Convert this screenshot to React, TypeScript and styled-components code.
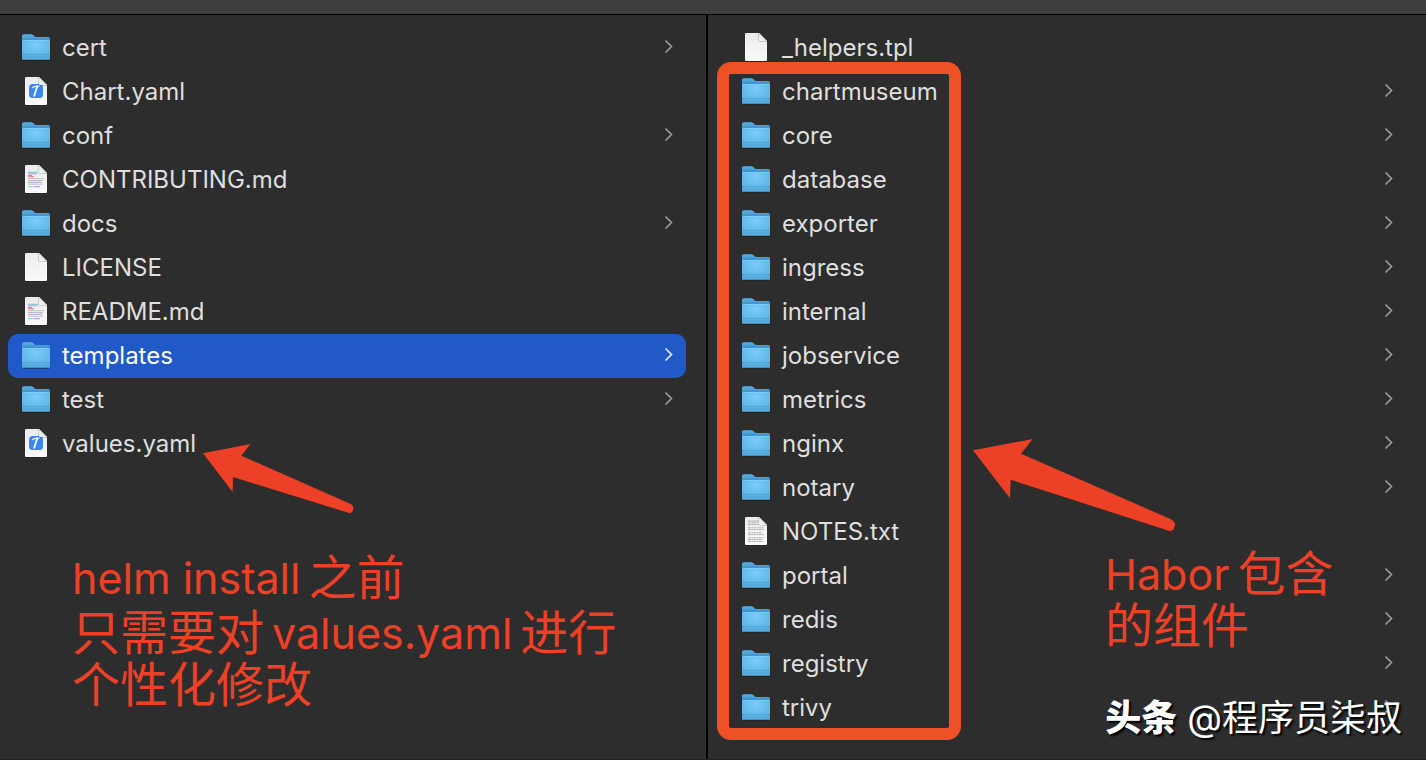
import React from "react";
import styled, { createGlobalStyle } from "styled-components";

const GlobalStyle = createGlobalStyle`
  *, *::before, *::after { box-sizing: border-box; }
  body {
    margin: 0;
    background: #2d2d2d;
    font-family: Inter, "Noto Sans CJK SC", sans-serif;
    -webkit-font-smoothing: antialiased;
  }
`;

const Page = styled.div`
  position: relative;
  display: flex;
  flex-direction: column;
  min-height: 100vh;
  background: #2d2d2d;
  border-bottom: 1px solid #232024;
`;

const Toolbar = styled.header`
  flex: none;
  height: 15px;
  background: #3e3e3e;
  border-bottom: 1px solid #000;
`;

const Browser = styled.main`
  flex: 1;
  display: flex;
`;

const Column = styled.section<{ $first?: boolean }>`
  position: relative;
  ${(p) =>
    p.$first
      ? "flex: none; width: calc(50% - 5px); padding: 11px 20px 10px 8px; border-right: 2px solid #000;"
      : "flex: 1; min-width: 0; padding: 11px 20px 10px;"}
`;

const FileList = styled.ul`
  margin: 0;
  padding: 0;
  list-style: none;
`;

const FileRow = styled.button<{ $selected?: boolean }>`
  display: flex;
  align-items: center;
  gap: 12px;
  width: 100%;
  height: 44px;
  padding: 0 14px;
  border: 0;
  border-radius: 10px;
  background: ${(p) => (p.$selected ? "#2159c8" : "transparent")};
  color: ${(p) => (p.$selected ? "#ffffff" : "#dfdfdf")};
  font-family: inherit;
  font-size: 24px;
  font-weight: 400;
  line-height: 32px;
  text-align: left;
`;

const FileName = styled.span`
  flex: 1;
  min-width: 0;
  white-space: nowrap;
`;

const IconSvg = styled.svg`
  flex: none;
  width: 28px;
  height: 32px;
  overflow: visible;
`;

const ChevronSvg = styled.svg<{ $selected?: boolean }>`
  flex: none;
  width: 8px;
  height: 14px;
  overflow: visible;
  fill: none;
  stroke: ${(p) => (p.$selected ? "#e4ebf9" : "#9b9b9b")};
  stroke-width: 1.7;
`;

const Highlight = styled.div`
  position: absolute;
  left: 9px;
  top: 47px;
  width: 244px;
  height: 678px;
  border: 12px solid #ee5126;
  border-radius: 14px;
  pointer-events: none;
`;

const Arrow = styled.svg<{ $x: number; $y: number }>`
  position: absolute;
  left: ${(p) => p.$x}px;
  top: ${(p) => p.$y}px;
  fill: #ec4126;
  pointer-events: none;
`;

const Note = styled.div<{ $x: number; $y: number }>`
  position: absolute;
  left: ${(p) => p.$x}px;
  top: ${(p) => p.$y}px;
  color: #ec4126;
  font-size: 48px;
  font-weight: 400;
  white-space: nowrap;
`;

const NoteLine = styled.p<{ $tall?: boolean }>`
  display: flex;
  gap: 8px;
  margin: 0;
  line-height: ${(p) => (p.$tall ? 58 : 52)}px;
`;

const Latin = styled.span`
  font-size: 43px;
`;

const Watermark = styled.div`
  position: absolute;
  right: 24px;
  bottom: 15px;
  display: flex;
  align-items: center;
  gap: 10px;
  color: #fff;
  font-size: 36px;
  line-height: 52px;
  white-space: nowrap;
  text-shadow: 2px 2px 2px #000;
`;

const WatermarkBrand = styled.strong`
  font-weight: 900;
`;

type Kind = "folder" | "yaml" | "md" | "blank" | "txt";
type Item = { name: string; kind: Kind; selected?: boolean };

const rootItems: Item[] = [
  { name: "cert", kind: "folder" },
  { name: "Chart.yaml", kind: "yaml" },
  { name: "conf", kind: "folder" },
  { name: "CONTRIBUTING.md", kind: "md" },
  { name: "docs", kind: "folder" },
  { name: "LICENSE", kind: "blank" },
  { name: "README.md", kind: "md" },
  { name: "templates", kind: "folder", selected: true },
  { name: "test", kind: "folder" },
  { name: "values.yaml", kind: "yaml" },
];

const templateItems: Item[] = [
  { name: "_helpers.tpl", kind: "blank" },
  { name: "chartmuseum", kind: "folder" },
  { name: "core", kind: "folder" },
  { name: "database", kind: "folder" },
  { name: "exporter", kind: "folder" },
  { name: "ingress", kind: "folder" },
  { name: "internal", kind: "folder" },
  { name: "jobservice", kind: "folder" },
  { name: "metrics", kind: "folder" },
  { name: "nginx", kind: "folder" },
  { name: "notary", kind: "folder" },
  { name: "NOTES.txt", kind: "txt" },
  { name: "portal", kind: "folder" },
  { name: "redis", kind: "folder" },
  { name: "registry", kind: "folder" },
  { name: "trivy", kind: "folder" },
];

function IconDefs() {
  return (
    <svg width="0" height="0" style={{ position: "absolute" }} aria-hidden="true">
      <defs>
        <linearGradient id="folderBack" x1="0" y1="0" x2="0" y2="1">
          <stop offset="0" stopColor="#58b2e6" />
          <stop offset="0.3" stopColor="#3a87c4" />
          <stop offset="1" stopColor="#3a87c4" />
        </linearGradient>
        <radialGradient id="folderFront" cx="0.5" cy="0.25" r="0.75">
          <stop offset="0" stopColor="#7acbf8" />
          <stop offset="1" stopColor="#59b1e4" />
        </radialGradient>
        <linearGradient id="paper" x1="0" y1="0" x2="0" y2="1">
          <stop offset="0" stopColor="#ececec" />
          <stop offset="1" stopColor="#fafafa" />
        </linearGradient>
        <linearGradient id="fold" x1="0" y1="1" x2="1" y2="0">
          <stop offset="0" stopColor="#ffffff" />
          <stop offset="0.5" stopColor="#e2e2e2" />
          <stop offset="1" stopColor="#bdbdbd" />
        </linearGradient>
      </defs>
    </svg>
  );
}

function FolderIcon() {
  return (
    <IconSvg viewBox="0 1 28 32" aria-hidden="true">
      <path d="M1 28.5h26v1.2H1z" fill="#1d2226" opacity="0.7" />
      <path d="M0 5a1.8 1.8 0 0 1 1.8-1.8H9c1 0 1.5.3 2.2.9l1.3 1.2c.5.5 1 .7 1.7.7H26.5A1.5 1.5 0 0 1 28 7.5V27H0z" fill="url(#folderBack)" />
      <path d="M0 10.3A1.3 1.3 0 0 1 1.3 9H26.7A1.3 1.3 0 0 1 28 10.3V27.5A1.5 1.5 0 0 1 26.5 29H1.5A1.5 1.5 0 0 1 0 27.5z" fill="url(#folderFront)" />
      <path d="M.8 9.5H27.2" stroke="#85d3fa" strokeWidth="0.7" />
      <path d="M0 23.7H28M0 26H28" stroke="#4698cc" strokeWidth="0.7" />
      <path d="M.8 28.5H27.2" stroke="#3c8dc2" strokeWidth="1" />
    </IconSvg>
  );
}

const textRows = [6, 7.8, 9.6, 12.8, 14.6, 17.8, 19.6, 22.8, 24.6, 26.4];

function DocumentIcon({ kind }: { kind: Kind }) {
  return (
    <IconSvg viewBox="0 1 28 32" aria-hidden="true">
      <path d="M4 29.5h20.5v1.2H4z" fill="#1b1b1b" opacity="0.7" />
      <path d="M3 3.2A1.2 1.2 0 0 1 4.2 2H17L25 10V28.8A1.2 1.2 0 0 1 23.8 30H4.2A1.2 1.2 0 0 1 3 28.8z" fill="url(#paper)" />
      {kind === "yaml" && (
        <>
          <rect x="7" y="9" width="14" height="14" rx="3.5" fill="#3b86f7" />
          <path d="M15.2 11.500 12.200 20.800" stroke="#fff" strokeWidth="1.800" strokeLinecap="round" />
          <path d="M10.800 12.500c1-1.100 3-1.500 6.200-1.300" fill="none" stroke="#fff" strokeWidth="1.200" strokeLinecap="round" />
        </>
      )}
      {kind === "md" && (
        <g fill="none" strokeWidth="0.8">
          <path d="M6 9.3H16" stroke="#58b8c0" />
          <path d="M6 10.8H15" stroke="#8a9ad0" />
          <path d="M6 12.4H10" stroke="#d84c9b" />
          <path d="M6 13.8H12" stroke="#e0405e" />
          <path d="M6 15.7H22M6 17.5H21M6 21.2H21" stroke="#b0b0ba" />
          <path d="M6 19.3H20" stroke="#9a90cf" />
          <path d="M6 23.7H11" stroke="#5cc5b8" />
          <path d="M12 23.7H18" stroke="#6b7ee0" />
        </g>
      )}
      {kind === "txt" && (
        <g stroke="#a0a0a0" strokeWidth="0.8" fill="none">
          {textRows.map((y, i) => (
            <path key={y} d={`M6 ${y}H${i < 3 ? 16 : i % 3 === 2 ? 20 : 22}`} strokeDasharray="3 .5 1.5 .4" />
          ))}
        </g>
      )}
      <path d="M16.5 2V9A1.5 1.5 0 0 0 18 10.6H25V10z" fill="#000" opacity="0.3" />
      <path d="M17 2V8.8A1.2 1.2 0 0 0 18.2 10H25z" fill="url(#fold)" />
    </IconSvg>
  );
}

function Files({ items }: { items: Item[] }) {
  return (
    <FileList>
      {items.map((item) => (
        <li key={item.name}>
          <FileRow type="button" $selected={item.selected}>
            {item.kind === "folder" ? <FolderIcon /> : <DocumentIcon kind={item.kind} />}
            <FileName>{item.name}</FileName>
            {item.kind === "folder" && (
              <ChevronSvg viewBox="0 1 8 14" $selected={item.selected} aria-hidden="true">
                <path d="M1.5 .5 7.5 6.5 1.5 12.5" />
              </ChevronSvg>
            )}
          </FileRow>
        </li>
      ))}
    </FileList>
  );
}

export default function App() {
  return (
    <Page>
      <GlobalStyle />
      <IconDefs />
      <Toolbar />
      <Browser>
        <Column $first>
          <Files items={rootItems} />
          <Arrow $x={203} $y={429} width="151" height="70" viewBox="0 0 151 70" aria-hidden="true">
            <path d="M0 9.3 47.5 0 38.3 11.7 147.7 60Q151 62 150.3 65.5 149 69.5 146 69L30 33 29.7 48z" />
          </Arrow>
          <Note $x={72} $y={534}>
            <NoteLine $tall>
              <Latin>helm install</Latin>
              <span>之前</span>
            </NoteLine>
            <NoteLine>
              <span>只需要对</span>
              <Latin>values.yaml</Latin>
              <span>进行</span>
            </NoteLine>
            <NoteLine>
              <span>个性化修改</span>
            </NoteLine>
          </Note>
        </Column>
        <Column>
          <Files items={templateItems} />
          <Highlight />
          <Arrow $x={265} $y={424} width="203" height="93" viewBox="0 0 203 93" aria-hidden="true">
            <path d="M0 11.3 59.7 0 48 14.7 197.5 80Q202.5 83 202 86.5 200.5 92.5 196.5 92L37.7 40.7 37 59.3z" />
          </Arrow>
          <Note $x={397} $y={533}>
            <NoteLine>
              <Latin>Habor</Latin>
              <span>包含</span>
            </NoteLine>
            <NoteLine>
              <span>的组件</span>
            </NoteLine>
          </Note>
        </Column>
      </Browser>
      <Watermark>
        <WatermarkBrand>头条</WatermarkBrand>
        <span>@程序员柒叔</span>
      </Watermark>
    </Page>
  );
}
